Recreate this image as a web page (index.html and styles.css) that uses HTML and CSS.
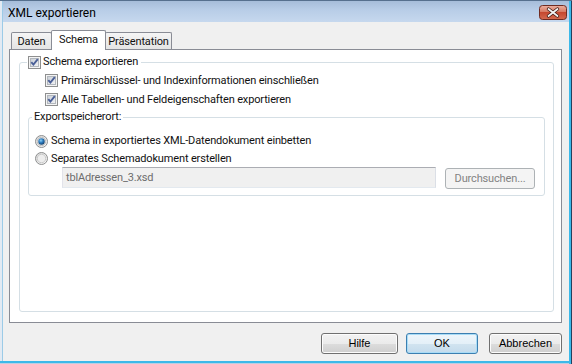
FILE: index.html
```
<!DOCTYPE html>
<html lang="de">
<head>
<meta charset="utf-8">
<title>XML exportieren</title>
<link rel="stylesheet" href="styles.css">
</head>
<body>
<svg class="defs" width="0" height="0" aria-hidden="true">
  <defs>
    <linearGradient id="cbIn" x1="0" y1="0" x2="1" y2="1">
      <stop offset="0" stop-color="#c9ced5"/>
      <stop offset="1" stop-color="#f3f4f6"/>
    </linearGradient>
    <linearGradient id="rdOut" x1="0" y1="0" x2="1" y2="1">
      <stop offset="0" stop-color="#d6d6d6"/>
      <stop offset="1" stop-color="#fbfbfb"/>
    </linearGradient>
    <radialGradient id="rdDot" cx="0.4" cy="0.35" r="0.7">
      <stop offset="0" stop-color="#8fd3f7"/>
      <stop offset="0.45" stop-color="#2f7fc2"/>
      <stop offset="1" stop-color="#0f3a66"/>
    </radialGradient>
    <linearGradient id="closeG" x1="0" y1="0" x2="0" y2="1">
      <stop offset="0" stop-color="#ebb0a2"/>
      <stop offset="0.45" stop-color="#d77a63"/>
      <stop offset="0.5" stop-color="#c6482f"/>
      <stop offset="1" stop-color="#d56a4f"/>
    </linearGradient>
    <symbol id="cb" viewBox="0 0 13 13">
      <rect x="0.5" y="0.5" width="12" height="12" fill="#f4f4f4" stroke="#8e8f8f"/>
      <rect x="2.5" y="2.5" width="8" height="8" fill="url(#cbIn)" stroke="#b2b7bd"/>
      <path d="M3.3 6.2 L5.4 8.6 L9.8 3.2" fill="none" stroke="#4a5f97" stroke-width="1.9"/>
    </symbol>
    <symbol id="rdOn" viewBox="0 0 13 13">
      <circle cx="6.5" cy="6.5" r="6" fill="url(#rdOut)" stroke="#8e8f8f"/>
      <circle cx="6.5" cy="6.5" r="4.2" fill="#e8e8e8" stroke="#b5b5b5" stroke-width="0.8"/>
      <circle cx="6.5" cy="6.5" r="3.2" fill="url(#rdDot)"/>
    </symbol>
    <symbol id="rdOff" viewBox="0 0 13 13">
      <circle cx="6.5" cy="6.5" r="6" fill="url(#rdOut)" stroke="#8e8f8f"/>
      <circle cx="6.5" cy="6.5" r="4.2" fill="#ededed" stroke="#c2c2c2" stroke-width="0.8"/>
    </symbol>
  </defs>
</svg>
<div class="window">
  <div class="titlebar">
    <span class="title">XML exportieren</span>
    <svg class="close" width="28" height="15" viewBox="0 0 28 15">
      <rect x="0.5" y="0.5" width="27" height="14" rx="3" fill="url(#closeG)" stroke="#6f2b21"/>
      <path d="M9.5 4 L18.5 11 M18.5 4 L9.5 11" stroke="#3f1a14" stroke-width="3.4" stroke-linecap="round"/>
      <path d="M9.5 4 L18.5 11 M18.5 4 L9.5 11" stroke="#f4f4f4" stroke-width="1.8" stroke-linecap="round"/>
    </svg>
  </div>
  <div class="client">
    <div class="tabs">
      <div class="tab t-daten">Daten</div>
      <div class="tab t-schema sel">Schema</div>
      <div class="tab t-pres">Präsentation</div>
    </div>
    <div class="panel">
      <fieldset class="grp outer">
        <legend class="lg-outer"><svg class="ico" width="13" height="13"><use href="#cb"/></svg><span>Schema exportieren</span></legend>
        <div class="row first"><svg class="ico" width="13" height="13"><use href="#cb"/></svg><span>Primärschlüssel- und Indexinformationen einschließen</span></div>
        <div class="row"><svg class="ico" width="13" height="13"><use href="#cb"/></svg><span>Alle Tabellen- und Feldeigenschaften exportieren</span></div>
        <fieldset class="grp inner">
          <legend class="lg-inner">Exportspeicherort:</legend>
          <div class="rrow first"><svg class="ico" width="13" height="13"><use href="#rdOn"/></svg><span>Schema in exportiertes XML-Datendokument einbetten</span></div>
          <div class="rrow second"><svg class="ico" width="13" height="13"><use href="#rdOff"/></svg><span>Separates Schemadokument erstellen</span></div>
          <div class="filerow">
            <div class="textbox">tblAdressen_3.xsd</div>
            <div class="browse">Durchsuchen...</div>
          </div>
        </fieldset>
      </fieldset>
    </div>
    <div class="buttons">
      <div class="btn b-help">Hilfe</div>
      <div class="btn b-ok">OK</div>
      <div class="btn b-cancel">Abbrechen</div>
    </div>
  </div>
</div>
</body>
</html>
```
FILE: styles.css
```
* { box-sizing: border-box; }
html, body { margin: 0; padding: 0; }
body {
  width: 572px;
  height: 364px;
  overflow: hidden;
  font-family: Roboto, "Noto Sans", sans-serif;
  font-size: 11px;
  letter-spacing: -0.15px;
  color: #111;
  background: #f0f0f0;
}
.defs { display: block; width: 0; height: 0; overflow: hidden; }

.window {
  position: relative;
  width: 572px;
  height: 364px;
  background: #f0f0f0;
  display: flex;
  flex-direction: column;
}
.window::after {
  content: "";
  position: absolute;
  inset: 0;
  pointer-events: none;
  box-shadow:
    inset 0 1px 0 #56708e,
    inset -1px 0 0 #24405e,
    inset -3px 0 0 #3cb9e9,
    inset 0 -1px 0 #b9cfe3,
    inset 0 -3px 0 #3cb9e9,
    inset 2px 0 0 #e2eaf3,
    inset 3px 0 0 #9ccbe7;
}

.titlebar {
  height: 22px;
  flex: none;
  display: flex;
  justify-content: space-between;
  align-items: flex-start;
  background: linear-gradient(#a4bbd8 0%, #b8cde7 45%, #c6d8ee 100%);
}
.title {
  padding: 6px 0 0 8px;
  font-size: 12px;
  line-height: 14px;
  letter-spacing: 0;
  color: #000;
}
.close { margin: 5px 5px 0 0; display: block; }

.client {
  flex: 1;
  padding-top: 8px;
  display: flex;
  flex-direction: column;
}

.tabs {
  display: flex;
  align-items: flex-end;
  margin-left: 11px;
  position: relative;
  z-index: 1;
}
.tab {
  height: 17px;
  border: 1px solid #898c95;
  border-bottom: none;
  border-radius: 2px 2px 0 0;
  background: linear-gradient(#f5f5f5, #e4e4e4);
  padding-top: 2px;
  line-height: 13px;
  text-align: center;
}
.t-daten { width: 41px; }
.t-schema { width: 55px; margin-left: -1px; }
.t-pres { width: 67px; margin-left: -1px; }
.tab.sel {
  height: 20px;
  margin-bottom: -1px;
  background: #fff;
  position: relative;
  z-index: 2;
}

.panel {
  margin-left: 9px;
  width: 553px;
  height: 274px;
  border: 1px solid #898c95;
  background: #fff;
  flex: none;
}

.grp {
  margin: 0;
  border: 1px solid #d5dfe5;
  border-radius: 3px;
  min-inline-size: 0;
}
.outer {
  margin: 5px 0 0 9px;
  width: 535px;
  height: 257px;
  padding: 2px 0 0 7px;
}
.lg-outer {
  display: flex;
  align-items: center;
  height: 14px;
  padding: 0 3px 0 1px;
  gap: 2px;
  line-height: 14px;
}
.ico { display: block; flex: none; }
.row {
  display: flex;
  align-items: center;
  gap: 3px;
  height: 19px;
  margin-left: 18px;
  line-height: 14px;
}
.inner {
  margin: 1px 0 0 1px;
  width: 517px;
  padding: 0 0 6px 3px;
}
.lg-inner {
  padding: 0 2px;
  height: 14px;
  line-height: 14px;
}
.rrow {
  display: flex;
  align-items: center;
  gap: 3px;
  margin-left: 3px;
  line-height: 14px;
}
.rrow.first { height: 18px; margin-top: 8px; }
.rrow.second { height: 17px; }

.filerow {
  display: flex;
  align-items: flex-start;
  margin-left: 30px;
}
.textbox {
  width: 374px;
  height: 21px;
  border: 1px solid #abadb3;
  border-color: #abadb3 #dbdfe6 #e3e9ef #e2e3ea;
  background: #f0f0f0;
  color: #6d6d6d;
  padding-left: 3px;
  line-height: 19px;
}
.browse {
  width: 90px;
  height: 21px;
  margin: 1px 0 0 9px;
  border: 1px solid #adb2b5;
  border-radius: 3px;
  background: #f4f4f4;
  color: #838383;
  text-align: center;
  line-height: 19px;
}

.buttons {
  display: flex;
  justify-content: flex-end;
  margin-top: 10px;
  padding-right: 10px;
}
.btn {
  height: 21px;
  border: 1px solid #707070;
  border-radius: 3px;
  background: linear-gradient(#f2f2f2 0%, #ebebeb 50%, #dddddd 50%, #cfcfcf 100%);
  box-shadow: inset 0 0 0 1px #fcfcfc;
  font-family: "Liberation Sans", Arial, sans-serif;
  font-size: 11px;
  letter-spacing: 0;
  color: #000;
  line-height: 19px;
  text-align: center;
}
.b-help { width: 77px; }
.b-ok {
  width: 72px;
  margin-left: 8px;
  border-color: #3c7fb1;
  background: linear-gradient(#eef6fb 0%, #e4f0f8 50%, #d2e4f0 50%, #c4dbec 100%);
  box-shadow: inset 0 0 0 1px #a9dcf6;
}
.b-cancel { width: 73px; margin-left: 11px; }
```
